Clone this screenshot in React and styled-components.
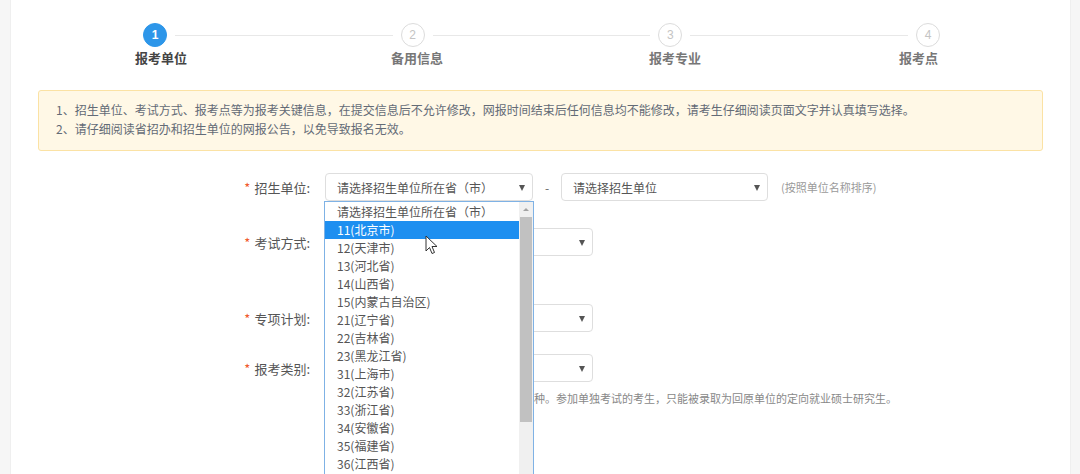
import React from 'react';
import styled, { createGlobalStyle } from 'styled-components';

const GlobalStyle = createGlobalStyle`
  html, body { margin: 0; padding: 0; overflow: hidden; }
  body {
    background: #f6f6f6;
    font-family: "Noto Sans CJK SC", "Noto Sans", "Liberation Sans", sans-serif;
    color: #555;
  }
`;

const Page = styled.div`
  display: flex;
  height: 474px;
  padding: 0 10px 0 11px;
  overflow: hidden;
`;

const Panel = styled.div`
  flex: 1;
  background: #fff;
  box-shadow: -1px 0 0 #efefef, 1px 0 0 #efefef;
  display: flex;
  flex-direction: column;
`;

const StepRow = styled.div`
  display: flex;
  align-items: center;
  padding: 23px 0 0 132px;
  width: 797px;
`;

const Circle = styled.div`
  width: 24px;
  height: 24px;
  box-sizing: border-box;
  border-radius: 50%;
  display: flex;
  align-items: center;
  justify-content: center;
  font-family: "Liberation Sans", Arial, sans-serif;
  font-size: 12px;
  flex: none;
  background: ${p => (p.$active ? '#2d96e9' : '#fff')};
  border: 1px solid ${p => (p.$active ? '#2d96e9' : '#dcdcdc')};
  color: ${p => (p.$active ? '#fff' : '#c4c4c4')};
  font-weight: ${p => (p.$active ? 700 : 400)};
`;

const Line = styled.div`
  flex: 1;
  height: 1px;
  background: #e8e8e8;
  margin: 0 8px;
`;

const LabelRow = styled.div`
  display: grid;
  grid-template-columns: 256px 258px 250px auto;
  padding-left: 124px;
  margin-top: 1px;
  height: 19px;
`;

const StepLabel = styled.div`
  font-size: 13px;
  line-height: 19px;
  font-weight: 700;
  color: ${p => (p.$active ? '#444' : '#777')};
`;

const Alert = styled.div`
  margin: 23px 27px 0;
  padding: 9px 17px 12px;
  background: #fff8e6;
  border: 1px solid #fbe2a4;
  border-radius: 3px;
  font-size: 12px;
  line-height: 19px;
  color: #636b76;
`;

const Form = styled.div`
  display: flex;
  flex-direction: column;
  margin-top: 22px;
`;

const Row = styled.div`
  display: grid;
  grid-template-columns: 299px 1fr;
  column-gap: 15px;
  align-items: center;
  margin-top: ${p => p.$mt || 0}px;
`;

const FieldLabel = styled.div`
  text-align: right;
  font-size: 13px;
  color: #555;
  white-space: nowrap;
`;

const Star = styled.span`
  color: #f15a2b;
  margin-right: 4px;
`;

const Controls = styled.div`
  display: flex;
  align-items: center;
`;

const SelectBox = styled.div`
  position: relative;
  width: ${p => p.$w}px;
  height: 28px;
  box-sizing: border-box;
  border: 1px solid #dedede;
  border-radius: 4px;
  background: #fff;
  display: flex;
  align-items: center;
  padding-left: 11px;
  font-size: 12px;
  color: #555;
  &::after {
    content: '';
    position: absolute;
    right: 7px;
    top: 11px;
    border-left: 3.5px solid transparent;
    border-right: 3.5px solid transparent;
    border-top: 6px solid #555;
  }
`;

const Dash = styled.span`
  width: 28px;
  text-align: center;
  color: #666;
  font-size: 12px;
`;

const Hint = styled.span`
  margin-left: 13px;
  font-size: 11px;
  color: #9a9a9a;
`;

const Help = styled.div`
  margin: 9px 0 0 314px;
  font-size: 11px;
  line-height: 15px;
  color: #888;
  white-space: nowrap;
`;

const Dropdown = styled.div`
  position: absolute;
  left: -2px;
  top: 27px;
  width: 210px;
  height: 274px;
  box-sizing: border-box;
  border: 1px solid #7fb2e5;
  border-bottom: none;
  background: #fff;
  display: flex;
  overflow: hidden;
  z-index: 5;
`;

const Options = styled.div`
  flex: 1;
  display: flex;
  flex-direction: column;
  padding-top: 1px;
`;

const Option = styled.div`
  height: 18px;
  line-height: 18px;
  padding-left: 12px;
  font-size: 12px;
  white-space: nowrap;
  color: ${p => (p.$hl ? '#fff' : '#555')};
  background: ${p => (p.$hl ? '#1e8ff0' : 'transparent')};
`;

const ScrollTrack = styled.div`
  width: 14px;
  background: #f0f0f0;
  display: flex;
  flex-direction: column;
  align-items: center;
`;

const ScrollUp = styled.div`
  height: 15px;
  display: flex;
  align-items: center;
  justify-content: center;
  &::before {
    content: '';
    border-left: 3px solid transparent;
    border-right: 3px solid transparent;
    border-bottom: 3px solid #a3a3a3;
  }
`;

const ScrollThumb = styled.div`
  width: 12px;
  height: 205px;
  background: #c1c1c1;
`;

const Cursor = styled.svg`
  position: absolute;
  left: 99px;
  top: 61px;
  z-index: 6;
`;

const provinces = [
  '请选择招生单位所在省（市）',
  '11(北京市)',
  '12(天津市)',
  '13(河北省)',
  '14(山西省)',
  '15(内蒙古自治区)',
  '21(辽宁省)',
  '22(吉林省)',
  '23(黑龙江省)',
  '31(上海市)',
  '32(江苏省)',
  '33(浙江省)',
  '34(安徽省)',
  '35(福建省)',
  '36(江西省)',
];

const steps = ['报考单位', '备用信息', '报考专业', '报考点'];

export default function App() {
  return (
    <>
      <GlobalStyle />
      <Page>
        <Panel>
          <StepRow>
            {steps.map((s, i) => (
              <React.Fragment key={s}>
                {i > 0 && <Line />}
                <Circle $active={i === 0}>{i + 1}</Circle>
              </React.Fragment>
            ))}
          </StepRow>
          <LabelRow>
            {steps.map((s, i) => (
              <StepLabel key={s} $active={i === 0}>{s}</StepLabel>
            ))}
          </LabelRow>

          <Alert>
            <div>1、招生单位、考试方式、报考点等为报考关键信息，在提交信息后不允许修改，网报时间结束后任何信息均不能修改，请考生仔细阅读页面文字并认真填写选择。</div>
            <div>2、请仔细阅读省招办和招生单位的网报公告，以免导致报名无效。</div>
          </Alert>

          <Form>
            <Row>
              <FieldLabel><Star>*</Star>招生单位:</FieldLabel>
              <Controls>
                <SelectBox $w={208}>
                  请选择招生单位所在省（市）
                  <Dropdown>
                    <Options>
                      {provinces.map((p, i) => (
                        <Option key={p} $hl={i === 1}>{p}</Option>
                      ))}
                    </Options>
                    <ScrollTrack>
                      <ScrollUp />
                      <ScrollThumb />
                    </ScrollTrack>
                  </Dropdown>
                  <Cursor width="13" height="20" viewBox="0 0 13 20">
                    <path d="M1 1 L1 16 L4.5 12.5 L7 18.5 L9.5 17.5 L7 11.5 L12 11.5 Z" fill="#fff" stroke="#333" strokeWidth="1" strokeLinejoin="round" />
                  </Cursor>
                </SelectBox>
                <Dash>-</Dash>
                <SelectBox $w={207}>请选择招生单位</SelectBox>
                <Hint>(按照单位名称排序)</Hint>
              </Controls>
            </Row>
            <Row $mt={27}>
              <FieldLabel><Star>*</Star>考试方式:</FieldLabel>
              <Controls><SelectBox $w={268} /></Controls>
            </Row>
            <Row $mt={48}>
              <FieldLabel><Star>*</Star>专项计划:</FieldLabel>
              <Controls><SelectBox $w={268} /></Controls>
            </Row>
            <Row $mt={22}>
              <FieldLabel><Star>*</Star>报考类别:</FieldLabel>
              <Controls><SelectBox $w={268} /></Controls>
            </Row>
            <Help>报考类别分为定向就业和非定向就业计划两种。参加单独考试的考生，只能被录取为回原单位的定向就业硕士研究生。</Help>
          </Form>
        </Panel>
      </Page>
    </>
  );
}
